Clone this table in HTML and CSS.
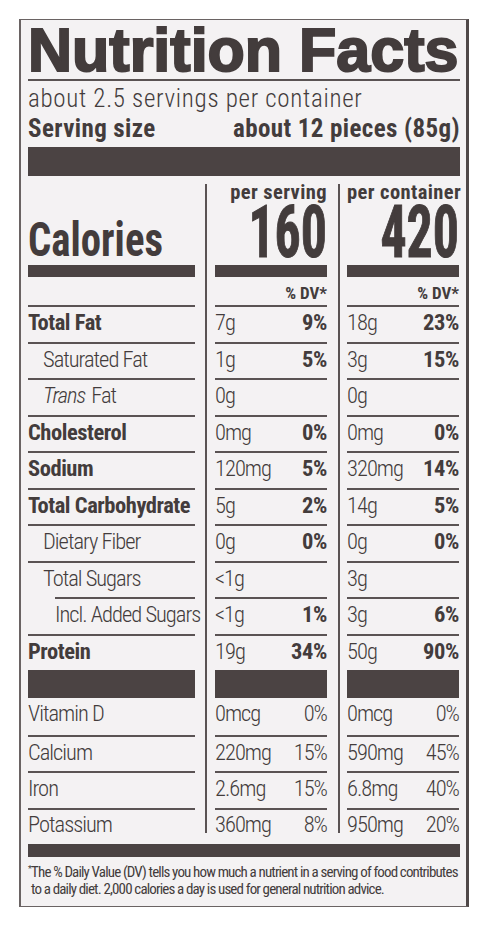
FILE: index.html
```html
<!DOCTYPE html>
<html lang="en">

<head>
    <meta charset="UTF-8">
    <meta name="viewport" content="width=device-width, initial-scale=1.0">
    <title>Nutrition Facts</title>
    <link rel="stylesheet" href="styles.css">
</head>

<body>

    <div class="label">
        <h1 class="title">Nutrition Facts</h1>
        <p class="servings">about 2.5 servings per container</p>
        <p class="serving-size"><span>Serving size</span><span>about 12 pieces (85g)</span></p>
        <div class="bar bar-lg"></div>

        <div class="facts">
            <div class="divider first"></div>
            <div class="divider second"></div>

            <!-- header -->
            <div class="head">
                <span class="calories">Calories</span>
                <div class="bar bar-md"></div>
                <div class="dv"></div>
            </div>
            <div class="head">
                <span class="per">per serving</span>
                <span class="kcal">160</span>
                <div class="bar bar-md"></div>
                <div class="dv">% DV*</div>
            </div>
            <div class="head">
                <span class="per">per container</span>
                <span class="kcal">420</span>
                <div class="bar bar-md"></div>
                <div class="dv">% DV*</div>
            </div>

            <!-- nutrients -->
            <div class="cell name strong">Total Fat</div>
            <div class="cell"><span>7g</span><b>9%</b></div>
            <div class="cell"><span>18g</span><b>23%</b></div>

            <div class="cell name sub">Saturated Fat</div>
            <div class="cell"><span>1g</span><b>5%</b></div>
            <div class="cell"><span>3g</span><b>15%</b></div>

            <div class="cell name sub"><span><i>Trans</i> Fat</span></div>
            <div class="cell"><span>0g</span></div>
            <div class="cell"><span>0g</span></div>

            <div class="cell name strong">Cholesterol</div>
            <div class="cell"><span>0mg</span><b>0%</b></div>
            <div class="cell"><span>0mg</span><b>0%</b></div>

            <div class="cell name strong">Sodium</div>
            <div class="cell"><span>120mg</span><b>5%</b></div>
            <div class="cell"><span>320mg</span><b>14%</b></div>

            <div class="cell name strong">Total Carbohydrate</div>
            <div class="cell"><span>5g</span><b>2%</b></div>
            <div class="cell"><span>14g</span><b>5%</b></div>

            <div class="cell name sub">Dietary Fiber</div>
            <div class="cell"><span>0g</span><b>0%</b></div>
            <div class="cell"><span>0g</span><b>0%</b></div>

            <div class="cell name sub">Total Sugars</div>
            <div class="cell"><span>&lt;1g</span></div>
            <div class="cell"><span>3g</span></div>

            <div class="cell name subsub">Incl. Added Sugars</div>
            <div class="cell"><span>&lt;1g</span><b>1%</b></div>
            <div class="cell"><span>3g</span><b>6%</b></div>

            <div class="cell name strong">Protein</div>
            <div class="cell"><span>19g</span><b>34%</b></div>
            <div class="cell"><span>50g</span><b>90%</b></div>

            <div class="bar bar-row"></div>
            <div class="bar bar-row"></div>
            <div class="bar bar-row"></div>

            <!-- vitamins & minerals -->
            <div class="cell name top">Vitamin D</div>
            <div class="cell top"><span>0mcg</span><span>0%</span></div>
            <div class="cell top"><span>0mcg</span><span>0%</span></div>

            <div class="cell name">Calcium</div>
            <div class="cell"><span>220mg</span><span>15%</span></div>
            <div class="cell"><span>590mg</span><span>45%</span></div>

            <div class="cell name">Iron</div>
            <div class="cell"><span>2.6mg</span><span>15%</span></div>
            <div class="cell"><span>6.8mg</span><span>40%</span></div>

            <div class="cell name last">Potassium</div>
            <div class="cell last"><span>360mg</span><span>8%</span></div>
            <div class="cell last"><span>950mg</span><span>20%</span></div>
        </div>

        <div class="bar bar-sm"></div>
        <p class="footnote"><sup>*</sup>The % Daily Value (DV) tells you how much a nutrient in a serving of food contributes<br>to a daily diet. 2,000 calories a day is used for general nutrition advice.</p>
    </div>

</body>

</html>
```
FILE: styles.css
```css
* {
    margin: 0;
    padding: 0;
    box-sizing: border-box;
}

body {
    background: #fff;
    color: #433c3c;
    font-family: "Roboto Condensed", "Liberation Sans", sans-serif;
}

.label {
    margin: 19px 0 0 19px;
    width: 450px;
    background: #f4f2f3;
    border: 1px solid #6a6363;
    border-left-width: 2px;
    border-right: 3px solid #4f4848;
    padding: 0 6px 8px 7px;
}

.title {
    font-family: "Liberation Sans", sans-serif;
    font-size: 61px;
    font-weight: bold;
    line-height: 58px;
    margin-top: 1px;
    -webkit-text-stroke: 2px #433c3c;
    border-bottom: 2px solid #5a5353;
    white-space: nowrap;
}

.servings {
    font-size: 25px;
    font-weight: 300;
    line-height: 35px;
    letter-spacing: 0.7px;
}

.serving-size {
    display: flex;
    justify-content: space-between;
    font-size: 25px;
    font-weight: 700;
    line-height: 25px;
    letter-spacing: 0.4px;
}

.bar {
    background: #4b4343;
}

.bar-lg {
    height: 29px;
    margin-top: 6px;
}

.bar-md {
    height: 12px;
}

.bar-sm {
    height: 13px;
    margin-top: 5.5px;
}

.bar-row {
    height: 28px;
}

/* the facts table */
.facts {
    margin-top: 8px;
    display: grid;
    grid-template-columns: 167px 20px 112px 20px 112px;
}

.divider {
    grid-row: 1 / span 16;
    width: 2px;
    background: #5a5353;
    margin-bottom: 5.5px;
}

.divider.first {
    grid-column: 2;
    margin-left: 10px;
}

.divider.second {
    grid-column: 4;
    margin-left: 11px;
}

.head {
    height: 121px;
    display: flex;
    flex-direction: column;
    justify-content: flex-end;
    text-align: right;
    font-weight: 700;
}

.calories {
    display: block;
    text-align: left;
    font-size: 49px;
    line-height: 51.5px;
    transform: scaleX(0.833);
    transform-origin: left;
}

.per {
    display: block;
    font-size: 20.5px;
    line-height: 16px;
    letter-spacing: 0.4px;
    white-space: nowrap;
}

.kcal {
    display: block;
    font-size: 72px;
    line-height: 65px;
    transform: scaleX(0.72);
    transform-origin: right;
    -webkit-text-stroke: 1px #433c3c;
}

.dv {
    height: 28px;
    padding-top: 5px;
    font-size: 17px;
    line-height: 23px;
}

.cell {
    height: 36.5px;
    display: flex;
    justify-content: space-between;
    border-top: 2px solid #5a5353;
    padding-bottom: 3px;
    font-size: 22.5px;
    font-weight: 300;
    line-height: 31.5px;
    letter-spacing: -1px;
    white-space: nowrap;
}

.cell b {
    font-weight: 700;
    letter-spacing: -0.4px;
}

.cell.top {
    border-top: none;
    padding-bottom: 1px;
}

.cell.last {
    height: 30.5px;
    padding-bottom: 0;
    line-height: 28.5px;
}

.name.strong {
    font-weight: 700;
    letter-spacing: -0.45px;
}

.name.sub {
    padding-left: 15px;
}

.name.subsub {
    margin-left: 27px;
}

.name i {
    padding-right: 2px;
}

.footnote {
    margin-top: 7px;
    padding-left: 3px;
    text-indent: -3px;
    font-size: 15px;
    line-height: 17px;
    letter-spacing: -0.85px;
    white-space: nowrap;
}

.footnote sup {
    font-size: 9px;
    vertical-align: 5px;
    line-height: 0;
}
```
